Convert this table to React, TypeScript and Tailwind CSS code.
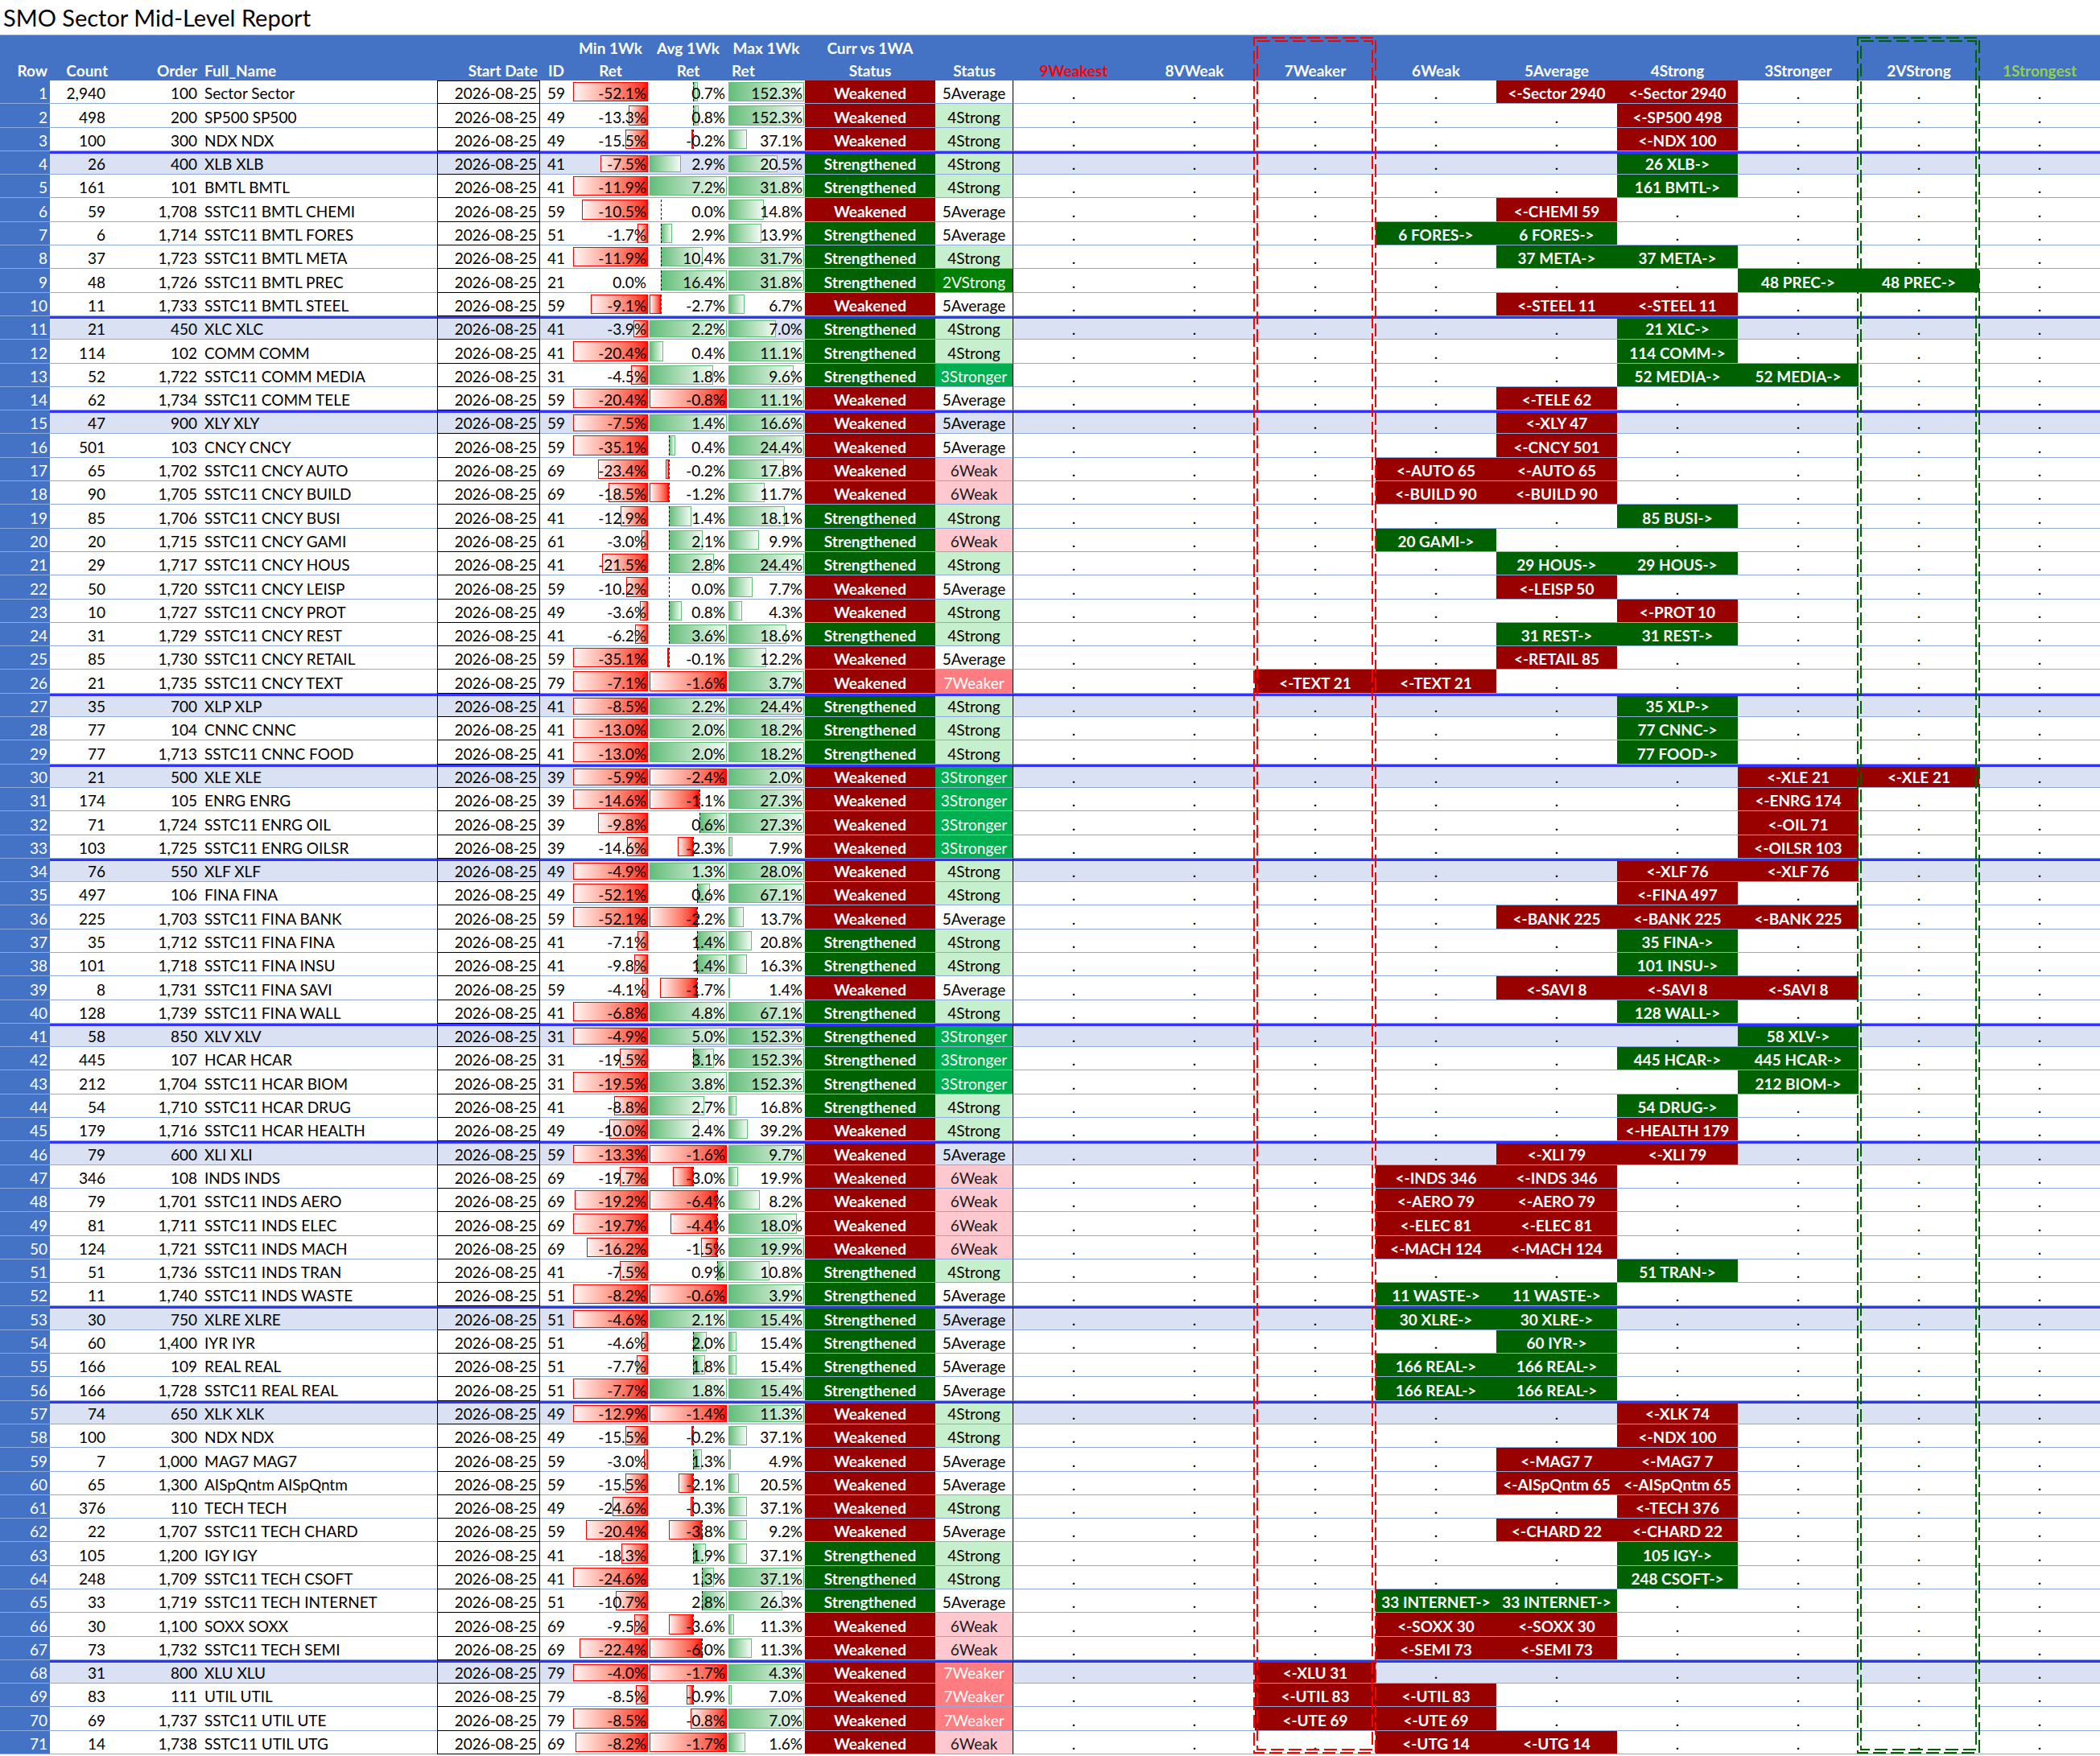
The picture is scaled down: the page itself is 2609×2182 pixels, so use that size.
import React from "react";

type Rec = [number, number, string, number, number, number, number, "W" | "S", string, number, number, "r" | "g"];

// count, order, name, id, min, avg, max, status, level status, from, to, colour
const DATA: Rec[] = [
  [2940, 100, "Sector Sector", 59, -52.1, 0.7, 152.3, "W", "5Average", 4, 5, "r"],
  [498, 200, "SP500 SP500", 49, -13.3, 0.8, 152.3, "W", "4Strong", 5, 5, "r"],
  [100, 300, "NDX NDX", 49, -15.5, -0.2, 37.1, "W", "4Strong", 5, 5, "r"],
  [26, 400, "XLB XLB", 41, -7.5, 2.9, 20.5, "S", "4Strong", 5, 5, "g"],
  [161, 101, "BMTL BMTL", 41, -11.9, 7.2, 31.8, "S", "4Strong", 5, 5, "g"],
  [59, 1708, "SSTC11 BMTL CHEMI", 59, -10.5, 0.0, 14.8, "W", "5Average", 4, 4, "r"],
  [6, 1714, "SSTC11 BMTL FORES", 51, -1.7, 2.9, 13.9, "S", "5Average", 3, 4, "g"],
  [37, 1723, "SSTC11 BMTL META", 41, -11.9, 10.4, 31.7, "S", "4Strong", 4, 5, "g"],
  [48, 1726, "SSTC11 BMTL PREC", 21, 0.0, 16.4, 31.8, "S", "2VStrong", 6, 7, "g"],
  [11, 1733, "SSTC11 BMTL STEEL", 59, -9.1, -2.7, 6.7, "W", "5Average", 4, 5, "r"],
  [21, 450, "XLC XLC", 41, -3.9, 2.2, 7.0, "S", "4Strong", 5, 5, "g"],
  [114, 102, "COMM COMM", 41, -20.4, 0.4, 11.1, "S", "4Strong", 5, 5, "g"],
  [52, 1722, "SSTC11 COMM MEDIA", 31, -4.5, 1.8, 9.6, "S", "3Stronger", 5, 6, "g"],
  [62, 1734, "SSTC11 COMM TELE", 59, -20.4, -0.8, 11.1, "W", "5Average", 4, 4, "r"],
  [47, 900, "XLY XLY", 59, -7.5, 1.4, 16.6, "W", "5Average", 4, 4, "r"],
  [501, 103, "CNCY CNCY", 59, -35.1, 0.4, 24.4, "W", "5Average", 4, 4, "r"],
  [65, 1702, "SSTC11 CNCY AUTO", 69, -23.4, -0.2, 17.8, "W", "6Weak", 3, 4, "r"],
  [90, 1705, "SSTC11 CNCY BUILD", 69, -18.5, -1.2, 11.7, "W", "6Weak", 3, 4, "r"],
  [85, 1706, "SSTC11 CNCY BUSI", 41, -12.9, 1.4, 18.1, "S", "4Strong", 5, 5, "g"],
  [20, 1715, "SSTC11 CNCY GAMI", 61, -3.0, 2.1, 9.9, "S", "6Weak", 3, 3, "g"],
  [29, 1717, "SSTC11 CNCY HOUS", 41, -21.5, 2.8, 24.4, "S", "4Strong", 4, 5, "g"],
  [50, 1720, "SSTC11 CNCY LEISP", 59, -10.2, 0.0, 7.7, "W", "5Average", 4, 4, "r"],
  [10, 1727, "SSTC11 CNCY PROT", 49, -3.6, 0.8, 4.3, "W", "4Strong", 5, 5, "r"],
  [31, 1729, "SSTC11 CNCY REST", 41, -6.2, 3.6, 18.6, "S", "4Strong", 4, 5, "g"],
  [85, 1730, "SSTC11 CNCY RETAIL", 59, -35.1, -0.1, 12.2, "W", "5Average", 4, 4, "r"],
  [21, 1735, "SSTC11 CNCY TEXT", 79, -7.1, -1.6, 3.7, "W", "7Weaker", 2, 3, "r"],
  [35, 700, "XLP XLP", 41, -8.5, 2.2, 24.4, "S", "4Strong", 5, 5, "g"],
  [77, 104, "CNNC CNNC", 41, -13.0, 2.0, 18.2, "S", "4Strong", 5, 5, "g"],
  [77, 1713, "SSTC11 CNNC FOOD", 41, -13.0, 2.0, 18.2, "S", "4Strong", 5, 5, "g"],
  [21, 500, "XLE XLE", 39, -5.9, -2.4, 2.0, "W", "3Stronger", 6, 7, "r"],
  [174, 105, "ENRG ENRG", 39, -14.6, -1.1, 27.3, "W", "3Stronger", 6, 6, "r"],
  [71, 1724, "SSTC11 ENRG OIL", 39, -9.8, 0.6, 27.3, "W", "3Stronger", 6, 6, "r"],
  [103, 1725, "SSTC11 ENRG OILSR", 39, -14.6, -2.3, 7.9, "W", "3Stronger", 6, 6, "r"],
  [76, 550, "XLF XLF", 49, -4.9, 1.3, 28.0, "W", "4Strong", 5, 6, "r"],
  [497, 106, "FINA FINA", 49, -52.1, 0.6, 67.1, "W", "4Strong", 5, 5, "r"],
  [225, 1703, "SSTC11 FINA BANK", 59, -52.1, -2.2, 13.7, "W", "5Average", 4, 6, "r"],
  [35, 1712, "SSTC11 FINA FINA", 41, -7.1, 1.4, 20.8, "S", "4Strong", 5, 5, "g"],
  [101, 1718, "SSTC11 FINA INSU", 41, -9.8, 1.4, 16.3, "S", "4Strong", 5, 5, "g"],
  [8, 1731, "SSTC11 FINA SAVI", 59, -4.1, -1.7, 1.4, "W", "5Average", 4, 6, "r"],
  [128, 1739, "SSTC11 FINA WALL", 41, -6.8, 4.8, 67.1, "S", "4Strong", 5, 5, "g"],
  [58, 850, "XLV XLV", 31, -4.9, 5.0, 152.3, "S", "3Stronger", 6, 6, "g"],
  [445, 107, "HCAR HCAR", 31, -19.5, 3.1, 152.3, "S", "3Stronger", 5, 6, "g"],
  [212, 1704, "SSTC11 HCAR BIOM", 31, -19.5, 3.8, 152.3, "S", "3Stronger", 6, 6, "g"],
  [54, 1710, "SSTC11 HCAR DRUG", 41, -8.8, 2.7, 16.8, "S", "4Strong", 5, 5, "g"],
  [179, 1716, "SSTC11 HCAR HEALTH", 49, -10.0, 2.4, 39.2, "W", "4Strong", 5, 5, "r"],
  [79, 600, "XLI XLI", 59, -13.3, -1.6, 9.7, "W", "5Average", 4, 5, "r"],
  [346, 108, "INDS INDS", 69, -19.7, -3.0, 19.9, "W", "6Weak", 3, 4, "r"],
  [79, 1701, "SSTC11 INDS AERO", 69, -19.2, -6.4, 8.2, "W", "6Weak", 3, 4, "r"],
  [81, 1711, "SSTC11 INDS ELEC", 69, -19.7, -4.4, 18.0, "W", "6Weak", 3, 4, "r"],
  [124, 1721, "SSTC11 INDS MACH", 69, -16.2, -1.5, 19.9, "W", "6Weak", 3, 4, "r"],
  [51, 1736, "SSTC11 INDS TRAN", 41, -7.5, 0.9, 10.8, "S", "4Strong", 5, 5, "g"],
  [11, 1740, "SSTC11 INDS WASTE", 51, -8.2, -0.6, 3.9, "S", "5Average", 3, 4, "g"],
  [30, 750, "XLRE XLRE", 51, -4.6, 2.1, 15.4, "S", "5Average", 3, 4, "g"],
  [60, 1400, "IYR IYR", 51, -4.6, 2.0, 15.4, "S", "5Average", 4, 4, "g"],
  [166, 109, "REAL REAL", 51, -7.7, 1.8, 15.4, "S", "5Average", 3, 4, "g"],
  [166, 1728, "SSTC11 REAL REAL", 51, -7.7, 1.8, 15.4, "S", "5Average", 3, 4, "g"],
  [74, 650, "XLK XLK", 49, -12.9, -1.4, 11.3, "W", "4Strong", 5, 5, "r"],
  [100, 300, "NDX NDX", 49, -15.5, -0.2, 37.1, "W", "4Strong", 5, 5, "r"],
  [7, 1000, "MAG7 MAG7", 59, -3.0, 1.3, 4.9, "W", "5Average", 4, 5, "r"],
  [65, 1300, "AISpQntm AISpQntm", 59, -15.5, -2.1, 20.5, "W", "5Average", 4, 5, "r"],
  [376, 110, "TECH TECH", 49, -24.6, -0.3, 37.1, "W", "4Strong", 5, 5, "r"],
  [22, 1707, "SSTC11 TECH CHARD", 59, -20.4, -3.8, 9.2, "W", "5Average", 4, 5, "r"],
  [105, 1200, "IGY IGY", 41, -18.3, 1.9, 37.1, "S", "4Strong", 5, 5, "g"],
  [248, 1709, "SSTC11 TECH CSOFT", 41, -24.6, 1.3, 37.1, "S", "4Strong", 5, 5, "g"],
  [33, 1719, "SSTC11 TECH INTERNET", 51, -10.7, 2.8, 26.3, "S", "5Average", 3, 4, "g"],
  [30, 1100, "SOXX SOXX", 69, -9.5, -3.6, 11.3, "W", "6Weak", 3, 4, "r"],
  [73, 1732, "SSTC11 TECH SEMI", 69, -22.4, -6.0, 11.3, "W", "6Weak", 3, 4, "r"],
  [31, 800, "XLU XLU", 79, -4.0, -1.7, 4.3, "W", "7Weaker", 2, 2, "r"],
  [83, 111, "UTIL UTIL", 79, -8.5, -0.9, 7.0, "W", "7Weaker", 2, 3, "r"],
  [69, 1737, "SSTC11 UTIL UTE", 79, -8.5, -0.8, 7.0, "W", "7Weaker", 2, 3, "r"],
  [14, 1738, "SSTC11 UTIL UTG", 69, -8.2, -1.7, 1.6, "W", "6Weak", 3, 4, "r"],
];

const GROUP_ROWS = new Set([4, 11, 15, 27, 30, 34, 41, 46, 53, 57, 68]);

// rows whose data bars share one scale (the sheet's formatting ranges)
const CHUNKS = [
  [4, 5],
  [6, 7, 8, 9, 10],
  [11, 12, 13],
  [16, 17, 18, 19, 20, 21, 22, 23, 24, 25],
  [31, 32],
  [35, 36, 37, 38, 39],
  [43, 44, 45],
  [48, 49, 50, 51],
  [62, 64, 65, 67],
  [70, 71],
];
const WIDE = new Set([1, 2, 3, 33, 42, 47, 54, 55, 58, 59, 60, 61, 63, 66, 69]);

const LEVELS = ["9Weakest", "8VWeak", "7Weaker", "6Weak", "5Average", "4Strong", "3Stronger", "2VStrong", "1Strongest"];

const GRID =
  "grid grid-cols-[62px_74px_113px_294px_128px_40px_95px_98px_96px_162px_97px_repeat(9,150px)]";

const STATUS2: Record<string, string> = {
  "5Average": "text-black",
  "4Strong": "bg-[#c6efce] text-black",
  "3Stronger": "bg-[#00b050] text-white",
  "2VStrong": "bg-[#008000] text-white",
  "6Weak": "bg-[#ffc7ce] text-[#1a1a1a]",
  "7Weaker": "bg-[#ff7c80] text-white",
};

function rangeFor(rowNo: number, col: 4 | 5 | 6): [number, number] {
  if (WIDE.has(rowNo)) {
    if (col === 4) return [-52.1, 0];
    if (col === 5) return [-6.4, 5.0];
    return [0, 152.3];
  }
  const members = CHUNKS.find((c) => c.includes(rowNo)) ?? [rowNo];
  const vals = members.map((n) => DATA[n - 1][col]);
  return [Math.min(...vals), Math.max(...vals)];
}

function geometry(v: number, lo: number, hi: number) {
  if (hi <= 0) {
    const w = lo === 0 ? 0 : v / lo;
    return { left: 1 - w, w, neg: true, axis: null as number | null };
  }
  if (lo >= 0) {
    const w = hi === 0 ? 0 : v / hi;
    return { left: 0, w, neg: false, axis: null as number | null };
  }
  const span = hi - lo;
  const axis = -lo / span;
  const w = Math.abs(v) / span;
  return { left: v < 0 ? axis - w : axis, w, neg: v < 0, axis };
}

function BarCell({ rowNo, col, group }: { rowNo: number; col: 4 | 5 | 6; group: boolean }) {
  const v = DATA[rowNo - 1][col];
  const [lo, hi] = rangeFor(rowNo, col);
  const g = geometry(v, lo, hi);
  return (
    <div
      className={`relative flex h-full items-end justify-end border-b border-[#8eaadb] pr-[3px] ${
        group ? "border-t-[3px] border-t-[#3333ff]" : ""
      }`}
    >
      <div className="absolute inset-y-[2px] left-[1px] right-[1px]">
        {g.w > 0 && (
          <div
            className={`absolute inset-y-0 border ${
              g.neg
                ? "border-[#ff0000] bg-linear-to-l from-[#ff0000] to-[#fff4f4]"
                : "border-[#63be7b] bg-linear-to-r from-[#63be7b] to-[#f4fbf6]"
            }`}
            style={{ left: `${g.left * 100}%`, width: `${g.w * 100}%` }}
          />
        )}
        {g.axis !== null && (
          <div
            className="absolute inset-y-0 border-l border-dashed border-black"
            style={{ left: `${g.axis * 100}%` }}
          />
        )}
      </div>
      <span className="relative leading-[24px]">{v.toFixed(1)}%</span>
    </div>
  );
}

function DataRow({ rec, rowNo }: { rec: Rec; rowNo: number }) {
  const [count, order, name, id, , , , status, status2, from, to, colour] = rec;
  const group = GROUP_ROWS.has(rowNo);
  const line = `border-b border-[#8eaadb] ${group ? "border-t-[3px] border-t-[#3333ff]" : ""}`;
  const short = name.split(" ").pop();
  const label = colour === "r" ? `<-${short} ${count}` : `${count} ${short}->`;

  return (
    <div className={`${GRID} h-[29.3px] ${group ? "bg-[#d9e1f2]" : "bg-white"}`}>
      <div
        className={`flex h-full items-end justify-end border-b border-[#8eaadb] bg-[#4472c4] pr-[3px] text-white ${
          group ? "border-t-[3px] border-t-[#4472c4]" : ""
        }`}
      >
        <span className="leading-[24px]">{rowNo}</span>
      </div>
      <div className={`flex h-full items-end justify-end pr-[5px] ${line}`}>
        <span className="leading-[24px]">{count.toLocaleString("en-US")}</span>
      </div>
      <div className={`flex h-full items-end justify-end pr-[4px] ${line}`}>
        <span className="leading-[24px]">{order.toLocaleString("en-US")}</span>
      </div>
      <div className={`flex h-full items-end pl-[5px] ${line}`}>
        <span className="leading-[24px]">{name}</span>
      </div>
      <div
        className={`flex h-full items-end justify-end border-x border-b border-black pr-[3px] ${
          group ? "border-t-[3px] border-t-[#3333ff]" : rowNo === 1 ? "border-t" : ""
        }`}
      >
        <span className="leading-[24px]">2026-08-25</span>
      </div>
      <div className={`flex h-full items-end justify-center ${line}`}>
        <span className="leading-[24px]">{id}</span>
      </div>
      <BarCell rowNo={rowNo} col={4} group={group} />
      <BarCell rowNo={rowNo} col={5} group={group} />
      <BarCell rowNo={rowNo} col={6} group={group} />
      <div
        className={`flex h-full items-end justify-center font-bold text-white ${line} ${
          status === "W" ? "bg-[#990000]" : "bg-[#006100]"
        }`}
      >
        <span className="leading-[24px]">{status === "W" ? "Weakened" : "Strengthened"}</span>
      </div>
      <div className={`flex h-full items-end justify-center border-r border-r-black ${line} ${STATUS2[status2]}`}>
        <span className="leading-[24px]">{status2}</span>
      </div>
      {LEVELS.map((lv, k) => {
        const filled = k >= from && k <= to;
        return (
          <div
            key={lv}
            className={`flex h-full items-end justify-center ${line} ${
              filled ? `font-bold text-white ${colour === "r" ? "bg-[#990000]" : "bg-[#006100]"}` : ""
            }`}
          >
            <span className="leading-[24px]">{filled ? label : "."}</span>
          </div>
        );
      })}
    </div>
  );
}

function Head({ top, bottom, align = "justify-center", tone = "text-white" }: {
  top?: string;
  bottom: string;
  align?: string;
  tone?: string;
}) {
  return (
    <div className={`flex h-full flex-col justify-end ${tone}`}>
      <div className={`flex h-[28px] items-end ${align}`}>
        <span className="leading-[24px]">{top ?? ""}</span>
      </div>
      <div className={`flex h-[28px] items-end ${align}`}>
        <span className="leading-[24px]">{bottom}</span>
      </div>
    </div>
  );
}

function DashedBox({ colour, left }: { colour: string; left: string }) {
  return (
    <div className={`pointer-events-none absolute top-[3px] h-[2133px] w-[153px] ${left}`}>
      <svg width="153" height="2133" viewBox="0 0 153 2133" fill="none">
        <rect x="1" y="1" width="151" height="2131" stroke={colour} strokeWidth="2" strokeDasharray="16 6" />
        <rect x="5" y="5" width="143" height="2123" stroke={colour} strokeWidth="2" strokeDasharray="16 6" />
      </svg>
    </div>
  );
}

export default function App() {
  return (
    <div className="w-[2609px] bg-white font-['Lato','Liberation_Sans',sans-serif] text-[19px] text-black">
      <div className="flex h-[43px] items-center pl-[4px] text-[29px] leading-none">SMO Sector Mid-Level Report</div>
      <div className="relative">
        <div className={`${GRID} h-[57px] border-t border-[#8eaadb] bg-[#4472c4] font-bold`}>
          <Head bottom="Row" align="justify-end pr-[3px]" />
          <Head bottom="Count" align="justify-end pr-[2px]" />
          <Head bottom="Order" align="justify-end pr-[4px]" />
          <Head bottom="Full_Name" align="justify-start pl-[5px]" />
          <Head bottom="Start Date" align="justify-end pr-[3px]" />
          <Head bottom="ID" />
          <Head top="Min 1Wk" bottom="Ret" />
          <Head top="Avg 1Wk" bottom="Ret" />
          <div className="flex h-full flex-col justify-end text-white">
            <div className="flex h-[28px] items-end justify-center">
              <span className="leading-[24px]">Max 1Wk</span>
            </div>
            <div className="flex h-[28px] items-end pl-[5px]">
              <span className="leading-[24px]">Ret</span>
            </div>
          </div>
          <Head top="Curr vs 1WA" bottom="Status" />
          <Head bottom="Status" />
          {LEVELS.map((lv) => (
            <Head
              key={lv}
              bottom={lv}
              tone={lv === "9Weakest" ? "text-[#ff0000]" : lv === "1Strongest" ? "text-[#92d050]" : "text-white"}
            />
          ))}
        </div>
        {DATA.map((rec, i) => (
          <DataRow key={i} rec={rec} rowNo={i + 1} />
        ))}
        <DashedBox colour="#ff0000" left="left-[1557px]" />
        <DashedBox colour="#006100" left="left-[2307px]" />
      </div>
    </div>
  );
}
